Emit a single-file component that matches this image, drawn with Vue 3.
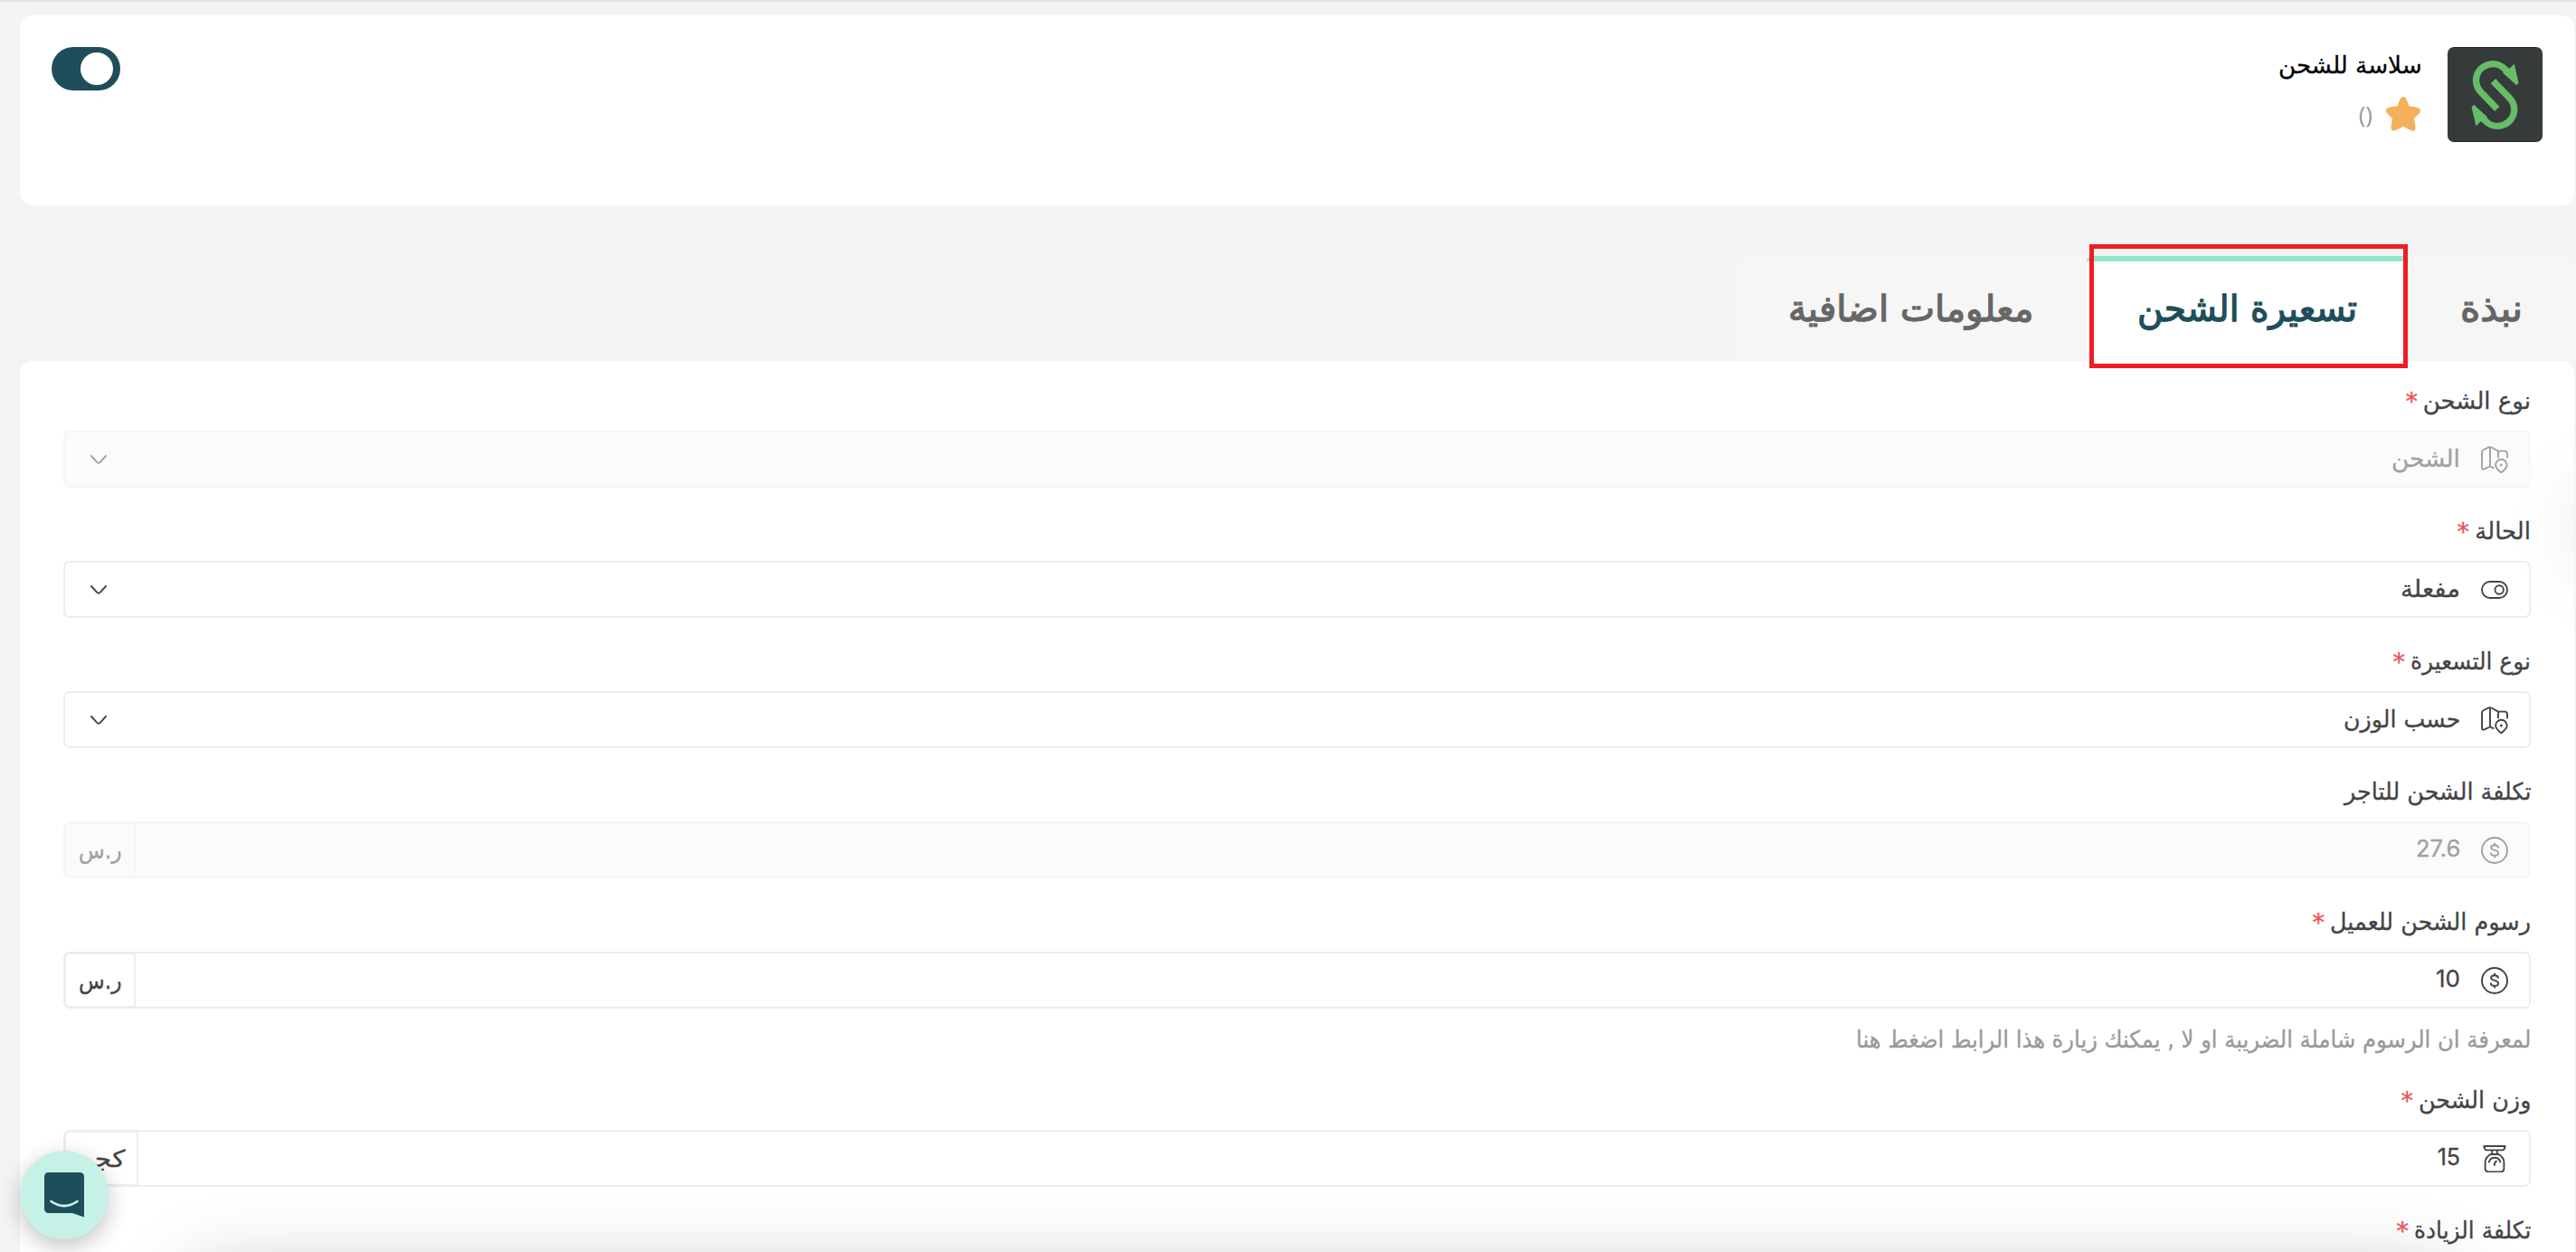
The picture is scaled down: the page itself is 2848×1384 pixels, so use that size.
<script setup>
const tabs = [
  { text: 'نبذة', box: 182, w: 69, pad: 57 },
  { text: 'تسعيرة الشحن', box: 355, w: 243, pad: 56, active: true },
  { text: 'معلومات اضافية', box: 383, w: 272, pad: 56 },
]

const fields = [
  { label: 'نوع الشحن', lw: 119, req: true, icon: 'map', value: 'الشحن', vw: 76, select: true, disabled: true },
  { label: 'الحالة', lw: 62, req: true, icon: 'switch', value: 'مفعلة', vw: 66, select: true },
  { label: 'نوع التسعيرة', lw: 133, req: true, icon: 'map', value: 'حسب الوزن', vw: 129, select: true },
  { label: 'تكلفة الشحن للتاجر', lw: 206, icon: 'dollar', value: '27.6', vw: 49, num: true, unit: 'ر.س', uw: 48, ubox: 79, disabled: true },
  { label: 'رسوم الشحن للعميل', lw: 222, req: true, icon: 'dollar', value: '10', vw: 27, num: true, unit: 'ر.س', uw: 48, ubox: 79, help: 'لمعرفة ان الرسوم شاملة الضريبة او لا , يمكنك زيارة هذا الرابط اضغط هنا', hw: 746 },
  { label: 'وزن الشحن', lw: 124, req: true, icon: 'scale', value: '15', vw: 25, num: true, unit: 'كجم', uw: 53, ubox: 82 },
  { label: 'تكلفة الزيادة', lw: 129, req: true, icon: 'scale', value: '', vw: 0 },
]

// Fits a run of text horizontally into its column width.
const vFit = {
  mounted(el, { value }) {
    const run = el.firstElementChild
    el.style.width = value + 'px'
    if (run.offsetWidth) run.style.transform = `scaleX(${value / run.offsetWidth})`
  },
}
</script>

<template>
  <div class="page" dir="rtl">
    <header class="card">
      <svg class="logo" viewBox="0 0 105 105">
        <rect width="105" height="105" rx="7" fill="#363a3b" />
        <path d="M7 .5H98M7 104.5H98" stroke="#1f2323" />
        <g v-for="r in [0, 180]" :key="r" :transform="`rotate(${r} 52.6 53)`">
          <path d="M68 29L63 24A18.5 18.5 0 0 0 31.5 37Q31.5 44.5 37 50L54.8 68.4" fill="none" stroke="#67bd67" stroke-width="7.4" />
          <path d="M73.7 18.6L78.6 39.5L76.2 42.2L61 28.5L66 22.5L68 24.2Z" fill="#67bd67" />
        </g>
      </svg>
      <div class="info">
        <h1 v-fit="159" class="fit"><span>سلاسة للشحن</span></h1>
        <div class="rating">
          <svg width="38" height="38" viewBox="0 0 38 38">
            <path d="M19 0C21.5 0 22.6 2.4 25.6 10.5C34 11.2 38 12.2 38 15.3C38 18.3 34.5 20.3 30.9 24C32.6 32.5 33.2 35.5 31.5 37C29 39 25.5 36 19 32.8C12.500 36 9 39 6.500 37C4.800 35.500 5.400 32.500 7.100 24C3.500 20.300 0 18.300 0 15.300C0 12.200 4 11.200 12.400 10.500C15.400 2.400 16.500 0 19 0Z" fill="#f4b05a" />
          </svg>
          <span class="count">()</span>
        </div>
      </div>
      <div class="toggle"><i></i></div>
    </header>

    <nav class="tabs">
      <div v-for="t in tabs" :key="t.text" class="tab" :class="{ active: t.active }" :style="{ width: t.box + 'px', paddingRight: t.pad + 'px' }">
        <span v-fit="t.w" class="fit"><span>{{ t.text }}</span></span>
        <b v-if="t.active" class="mark"></b>
      </div>
    </nav>

    <main class="panel">
      <i class="shade side"></i>
      <i class="shade bottom"></i>
      <section v-for="f in fields" :key="f.label" class="field" :class="{ disabled: f.disabled }">
        <label>
          <span v-fit="f.lw" class="fit"><span>{{ f.label }}</span></span>
          <em v-if="f.req">*</em>
        </label>
        <div class="input">
          <svg class="icon" viewBox="0 0 30 30" fill="none" stroke="currentColor" stroke-width="1.9" stroke-linecap="round" stroke-linejoin="round">
            <template v-if="f.icon === 'map'">
              <path d="M13.500 24.200L10 22.500L3.700 25.400Q1 26.500 1 23.500V7.200Q1 4.900 3 4L8.500 1.400Q10 .8 11.500 1.500L19 5.600H26Q29 5.600 29 8.500V12.500M10 1.400V22.500M19 5.600V12.500" />
              <path d="M22.200 29.400Q16.100 24.500 16.100 21A6.300 6.300 0 0 1 28.700 21Q28.700 24.500 22.200 29.400Z" />
              <circle cx="22.300" cy="21" r=".6" />
            </template>
            <template v-else-if="f.icon === 'switch'">
              <rect x="1" y="6" width="28" height="18" rx="9" />
              <circle cx="20.200" cy="15" r="4.700" />
            </template>
            <template v-else-if="f.icon === 'dollar'">
              <circle cx="15" cy="15" r="14" />
              <path d="M19 11.700C18.600 9.900 17.100 9.300 15 9.300C12.600 9.300 11.100 10.300 11.100 12C11.100 16 19.200 13.600 19.200 18C19.200 19.800 17.600 20.800 15 20.800C12.600 20.800 11 19.900 10.800 18.100M15 7.500V9.200M15 20.900V22.600" />
            </template>
            <template v-else>
              <path d="M3.700 1H26.300Q27 1 26.600 2L25.500 4.400Q25 5.400 23.700 5.400H6.300Q5 5.400 4.500 4.400L3.400 2Q3 1 3.700 1ZM12.200 5.600V10M17.800 5.600V10" />
              <path d="M10.500 10H19.500Q25.400 13.500 25.400 19V25.500Q25.400 29.400 21.500 29.400H8.500Q4.600 29.400 4.600 25.500V19Q4.600 13.500 10.500 10Z" />
              <path d="M8.900 18.500A6.400 6.400 0 0 1 21.300 18.500M17 17.500Q14 20 15 22" />
            </template>
          </svg>
          <span v-if="f.value" v-fit="f.vw" class="fit value" :class="{ num: f.num }"><span>{{ f.value }}</span></span>
          <svg v-if="f.select" class="chev" width="20" height="12" viewBox="0 0 20 12" fill="none" stroke="currentColor" stroke-width="1.900" stroke-linecap="round">
            <path d="M2 2L8 8.700Q10 10.700 12 8.700L18 2" />
          </svg>
          <div v-if="f.unit" class="unit" :style="{ width: f.ubox + 'px' }">
            <span v-fit="f.uw" class="fit"><span>{{ f.unit }}</span></span>
          </div>
        </div>
        <p v-if="f.help"><span v-fit="f.hw" class="fit"><span>{{ f.help }}</span></span></p>
      </section>
    </main>

    <div class="chat">
      <svg width="44" height="50" viewBox="0 0 44 50">
        <path d="M5 0H39Q44 0 44 5V49.500L31 45H5Q0 45 0 40V5Q0 0 5 0Z" fill="#1f4e5b" />
        <path d="M7.500 32Q22 42 36.500 32" fill="none" stroke="#c6f1e6" stroke-width="2.700" stroke-linecap="round" />
      </svg>
    </div>
  </div>
</template>

<style>
body { margin: 0; overflow: hidden; }
</style>

<style scoped>
* { box-sizing: border-box; }
.page {
  position: relative;
  width: 2848px;
  height: 1384px;
  overflow: hidden;
  padding: 15px 2px 0 22px;
  border-top: 2px solid #e2e2e2;
  background: #f4f4f4;
  color: #444;
  font-family: "DejaVu Sans", sans-serif;
  font-size: 26px;
}
.fit { display: block; flex: none; white-space: nowrap; }
.fit > span { display: inline-block; transform-origin: right center; -webkit-text-stroke: .3px currentColor; }
.card {
  display: flex;
  align-items: flex-start;
  height: 210px;
  padding: 35px;
  border-radius: 14px;
  background: #fff;
}
.logo { width: 105px; height: 105px; }
.info { margin-right: 28px; flex: 1; }
h1 { margin: 0; height: 40px; line-height: 40px; font-size: 26px; font-weight: 400; color: #000; }
.rating { display: flex; align-items: center; margin-top: 15px; }
.rating svg { margin-right: 2px; }
.count { margin-right: 15px; font-family: "Open Sans", sans-serif; font-size: 26px; line-height: 36px; color: #999; }
.toggle {
  display: flex;
  align-items: center;
  width: 76px;
  height: 48px;
  padding-right: 8px;
  border-radius: 24px;
  background: #1f4e5b;
}
.toggle i { width: 36px; height: 36px; border-radius: 50%; background: #fff; box-shadow: 0 10px 12px rgba(0, 0, 0, .02); }
.tabs { display: flex; gap: 2px; margin-top: 56px; height: 116px; }
.tab {
  position: relative;
  padding-top: 28px;
  border-radius: 6px 6px 0 0;
  background: #f6f6f6;
  color: #666;
  font-size: 40px;
  line-height: 60px;
}
.tab .fit > span { -webkit-text-stroke: 1.3px currentColor; }
.tab.active { padding-top: 22px; border-top: 6px solid #93e5cf; background: #fff; color: #1f4e5b; }
.mark { position: absolute; z-index: 3; inset: -19px 0 -8px 3px; border: 5px solid #f01c24; }
.panel {
  position: relative;
  height: 1100px;
  padding: 27px 48px 0;
  border-radius: 14px 14px 0 0;
  background: #fff;
  overflow: hidden;
}
.shade { position: absolute; border-radius: 20px; }
.side { left: 2846px; top: 155px; width: 100px; height: 60px; box-shadow: 0 0 100px rgba(0, 0, 0, .22); }
.bottom { left: 190px; right: 140px; top: 1014px; height: 100px; box-shadow: 0 0 90px rgba(0, 0, 0, .28); }
.field { position: relative; height: 144px; }
.field:has(p) { height: 197px; }
label { display: flex; height: 50px; line-height: 34px; }
em { margin-right: 6px; font-style: normal; font-size: 27px; color: #ea5455; line-height: 36px; -webkit-text-stroke: .4px currentColor; }
.input {
  position: relative;
  display: flex;
  align-items: center;
  height: 63px;
  padding: 0 23px;
  border: 2px solid #ededed;
  border-radius: 7px;
}
.icon { width: 30px; height: 30px; flex: none; }
.value { margin-right: 23px; height: 42px; line-height: 40px; }
.num { font-family: Inter, sans-serif; font-size: 25px; height: 44px; }
.chev { margin-right: auto; margin-left: 4px; }
.unit {
  position: absolute;
  left: -1px;
  top: -1px;
  bottom: -1px;
  display: flex;
  align-items: center;
  padding-right: 13px;
  border: 2px solid #ededed;
  border-radius: 6px 0 0 6px;
}
.disabled .input { border-color: #f6f6f6; background: #fbfbfb; color: #a1a1a1; }
.disabled .unit { border-color: #f6f6f6; }
p { margin: 16px 0 0; color: #999; line-height: 36px; }
.chat {
  position: absolute;
  left: 22px;
  top: 1270px;
  display: flex;
  justify-content: center;
  width: 98px;
  height: 98px;
  padding-top: 24px;
  border-radius: 50%;
  background: #c6f1e6;
  box-shadow: 0 8px 24px rgba(0, 0, 0, .24);
}
</style>
